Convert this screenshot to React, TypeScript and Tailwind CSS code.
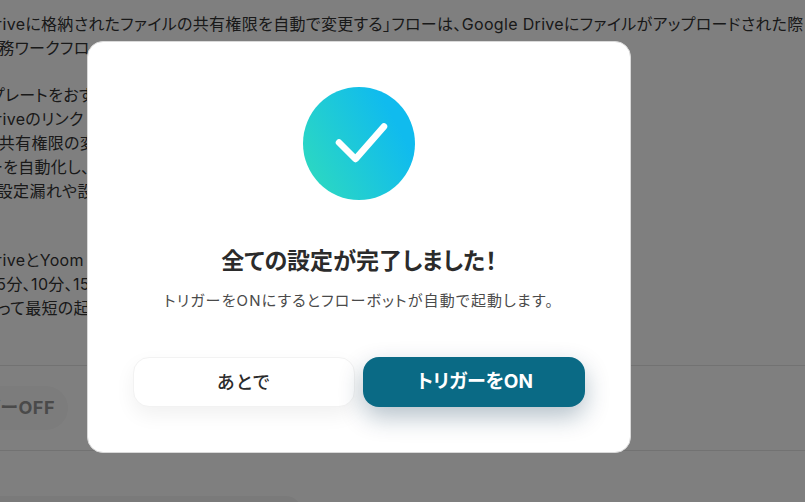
const font = { fontFamily: '"Inter", "Noto Sans CJK JP", sans-serif' };

const lines = [
  { t: "Google Driveに格納されたファイルの共有権限を自動で変更する」フローは、Google Driveにファイルがアップロードされた際に", indent: "ml-[-77px]" },
  { t: "業務ワークフロー", indent: "ml-[-18px]" },
  { t: "\u00a0", indent: "" },
  { t: "テンプレートをおすすめします", indent: "ml-[-39px]" },
  { t: "Google Driveのリンク", indent: "ml-[-77px]" },
  { t: "の共有権限の変更", indent: "ml-[-17px]" },
  { t: "ーを自動化し、", indent: "ml-[-13px]" },
  { t: "の設定漏れや設定", indent: "ml-[-19px]" },
];
const lines2 = [
  { t: "Google DriveとYoom", indent: "ml-[-77px]" },
  { t: "は5分、10分、15分", indent: "ml-[-20px]" },
  { t: "よって最短の起動", indent: "ml-[-16px]" },
];

export default function App() {
  return (
    <div style={font} className='relative h-[502px] w-[805px] overflow-hidden bg-white [font-feature-settings:"palt"]'>
      <div className="pt-[13px] text-[16px] leading-[23.8px] tracking-[0.33px] whitespace-nowrap text-[#333333]">
        {lines.map((l, i) => (
          <div key={i} className={l.indent}>{l.t}</div>
        ))}
        <div className="h-[46px]" />
        {lines2.map((l, i) => (
          <div key={i} className={l.indent}>{l.t}</div>
        ))}
        <div className="mt-[44px] h-[86px] border-y border-[#e5e5e5] flex items-center">
          <div className="ml-[-100px] flex h-11 w-[168px] items-center justify-end rounded-full bg-[#f8f8f8] pr-[13px] text-[18px] tracking-[0.5px] font-bold text-[#949494]">
            トリガーOFF
          </div>
        </div>
        <div className="mt-[45px] h-20 w-[322px] ml-[-20px] rounded-t-2xl bg-[#f5f5f5]" />
      </div>

      <div className="absolute inset-0 bg-black/50" />

      <div className="absolute left-[87px] top-[41px] flex h-[412px] w-[544px] flex-col items-center rounded-2xl border border-[#d9d9d9] bg-white">
        <svg className="mt-[45px]" width="112" height="113" viewBox="0 0 112 113">
          <defs>
            <linearGradient id="g" x1="0" y1="0.8" x2="0.85" y2="0.35">
              <stop offset="0" stopColor="#2dd9c0" />
              <stop offset="1" stopColor="#10bbee" />
            </linearGradient>
          </defs>
          <ellipse cx="56" cy="56.5" rx="56" ry="56.5" fill="url(#g)" />
          <path d="M36 55.5 L52.5 72 L81 39.5" fill="none" stroke="#ffffff" strokeWidth="6.5" strokeLinecap="round" strokeLinejoin="round" />
        </svg>
        <div className="mt-[45px] text-[23px] leading-8 font-bold text-[#2b2b2b]">全ての設定が完了しました！</div>
        <div className="mt-[12px] text-[15px] leading-6 tracking-[1.15px] text-[#4a4a4a]">トリガーをONにするとフローボットが自動で起動します。</div>
        <div className="mt-[44px] flex gap-2">
          <button className="h-[50px] w-[222px] rounded-2xl border border-[#f2f2f2] bg-white text-[18px] tracking-[1.5px] font-medium text-[#2b2b2b] shadow-[0_8px_20px_rgba(0,0,0,0.06)]">あとで</button>
          <button className="h-[50px] w-[222px] rounded-2xl bg-[#0a6a85] pl-[2px] text-[19px] font-bold text-white shadow-[0_10px_24px_rgba(10,50,80,0.3)]">トリガーをON</button>
        </div>
      </div>
    </div>
  );
}
